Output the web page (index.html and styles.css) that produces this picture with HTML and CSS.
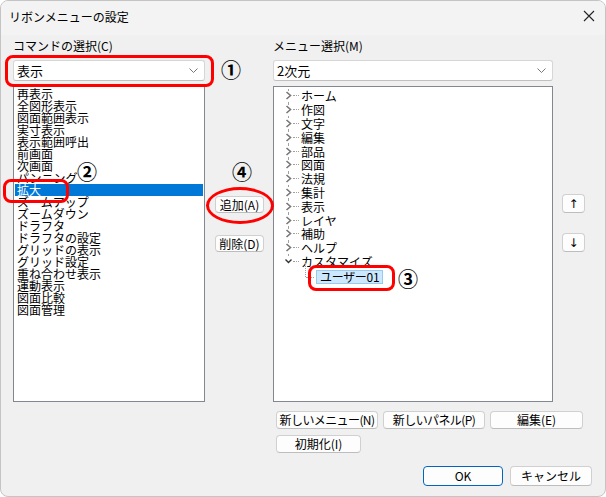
FILE: index.html
```html
<!DOCTYPE html>
<html lang="ja">
<head>
    <meta charset="UTF-8">
    <title>リボンメニューの設定</title>
    <link rel="stylesheet" href="styles.css">
</head>
<body>

<div class="window">
    <div class="titlebar">
        <span class="title">リボンメニューの設定</span>
        <svg class="close" width="12" height="12" viewBox="0 0 12 12"><path d="M1 1L11 11M11 1L1 11" stroke="#222" stroke-width="1.1"/></svg>
    </div>

    <div class="panes">
        <div class="col">
            <div class="label">コマンドの選択(C)</div>
            <div class="combo">
                <span>表示</span>
                <svg width="9" height="6" viewBox="0 0 9 6"><path d="M0.5 0.5L4.5 4.5L8.5 0.5" fill="none" stroke="#777"/></svg>
            </div>
            <ul class="listbox">
                <li>再表示</li>
                <li>全図形表示</li>
                <li>図面範囲表示</li>
                <li>実寸表示</li>
                <li>表示範囲呼出</li>
                <li>前画面</li>
                <li>次画面</li>
                <li>パンニング</li>
                <li class="selected">拡大</li>
                <li>ズームアップ</li>
                <li>ズームダウン</li>
                <li>ドラフタ</li>
                <li>ドラフタの設定</li>
                <li>グリッドの表示</li>
                <li>グリッド設定</li>
                <li>重ね合わせ表示</li>
                <li>運動表示</li>
                <li>図面比較</li>
                <li>図面管理</li>
            </ul>
        </div>

        <div class="col mid">
            <button class="btn add">追加(A)</button>
            <button class="btn del">削除(D)</button>
        </div>

        <div class="col">
            <div class="label">メニュー選択(M)</div>
            <div class="combo">
                <span>2次元</span>
                <svg width="9" height="6" viewBox="0 0 9 6"><path d="M0.5 0.5L4.5 4.5L8.5 0.5" fill="none" stroke="#777"/></svg>
            </div>
            <div class="tree">
                <ul class="nodes">
                    <li><span class="twisty"><svg width="7" height="9" viewBox="0 0 7 9"><path d="M1.5 1L5.5 4.5L1.5 8" fill="none" stroke="#777" stroke-width="1.6"/></svg></span><span class="dots"></span>ホーム</li>
                    <li><span class="twisty"><svg width="7" height="9" viewBox="0 0 7 9"><path d="M1.5 1L5.5 4.5L1.5 8" fill="none" stroke="#777" stroke-width="1.6"/></svg></span><span class="dots"></span>作図</li>
                    <li><span class="twisty"><svg width="7" height="9" viewBox="0 0 7 9"><path d="M1.5 1L5.5 4.5L1.5 8" fill="none" stroke="#777" stroke-width="1.6"/></svg></span><span class="dots"></span>文字</li>
                    <li><span class="twisty"><svg width="7" height="9" viewBox="0 0 7 9"><path d="M1.5 1L5.5 4.5L1.5 8" fill="none" stroke="#777" stroke-width="1.6"/></svg></span><span class="dots"></span>編集</li>
                    <li><span class="twisty"><svg width="7" height="9" viewBox="0 0 7 9"><path d="M1.5 1L5.5 4.5L1.5 8" fill="none" stroke="#777" stroke-width="1.6"/></svg></span><span class="dots"></span>部品</li>
                    <li><span class="twisty"><svg width="7" height="9" viewBox="0 0 7 9"><path d="M1.5 1L5.5 4.5L1.5 8" fill="none" stroke="#777" stroke-width="1.6"/></svg></span><span class="dots"></span>図面</li>
                    <li><span class="twisty"><svg width="7" height="9" viewBox="0 0 7 9"><path d="M1.5 1L5.5 4.5L1.5 8" fill="none" stroke="#777" stroke-width="1.6"/></svg></span><span class="dots"></span>法規</li>
                    <li><span class="twisty"><svg width="7" height="9" viewBox="0 0 7 9"><path d="M1.5 1L5.5 4.5L1.5 8" fill="none" stroke="#777" stroke-width="1.6"/></svg></span><span class="dots"></span>集計</li>
                    <li><span class="twisty"><svg width="7" height="9" viewBox="0 0 7 9"><path d="M1.5 1L5.5 4.5L1.5 8" fill="none" stroke="#777" stroke-width="1.6"/></svg></span><span class="dots"></span>表示</li>
                    <li><span class="twisty"><svg width="7" height="9" viewBox="0 0 7 9"><path d="M1.5 1L5.5 4.5L1.5 8" fill="none" stroke="#777" stroke-width="1.6"/></svg></span><span class="dots"></span>レイヤ</li>
                    <li><span class="twisty"><svg width="7" height="9" viewBox="0 0 7 9"><path d="M1.5 1L5.5 4.5L1.5 8" fill="none" stroke="#777" stroke-width="1.6"/></svg></span><span class="dots"></span>補助</li>
                    <li><span class="twisty"><svg width="7" height="9" viewBox="0 0 7 9"><path d="M1.5 1L5.5 4.5L1.5 8" fill="none" stroke="#777" stroke-width="1.6"/></svg></span><span class="dots"></span>ヘルプ</li>
                    <li class="open"><span class="twisty"><svg width="7" height="9" viewBox="0 0 7 9"><path d="M0.5 2.5L3.5 5.5L6.5 2.5" fill="none" stroke="#333" stroke-width="1.4"/></svg></span><span class="dots"></span>カスタマイズ</li>
                    <li class="child"><span class="dots"></span><span class="node-sel">ユーザー01</span></li>
                </ul>
            </div>
        </div>

        <div class="col arrows">
            <button class="btn arrow">&#x2191;</button>
            <button class="btn arrow">&#x2193;</button>
        </div>
    </div>

    <div class="tree-buttons">
        <div class="btn-row">
            <button class="btn w-new">新しいメニュー(N)</button>
            <button class="btn w-new">新しいパネル(P)</button>
            <button class="btn w-edit">編集(E)</button>
        </div>
        <div class="btn-row">
            <button class="btn w-init">初期化(I)</button>
        </div>
    </div>

    <div class="footer">
        <button class="btn ok">OK</button>
        <button class="btn cancel">キャンセル</button>
    </div>

    <!-- annotations drawn over the dialog -->
    <div class="mark r1"></div>
    <div class="mark r2"></div>
    <div class="mark r3"></div>
    <div class="mark r4"></div>
    <span class="num n1">①</span>
    <span class="num n2">②</span>
    <span class="num n3">③</span>
    <span class="num n4">④</span>
</div>

</body>
</html>
```

FILE: styles.css
```css
* {
    box-sizing: border-box;
}
body {
    margin: 0;
    background: #fff;
    font-family: "Noto Sans CJK JP", "Noto Sans", sans-serif;
    font-size: 12px;
    color: #000;
}
ul {
    list-style: none;
    margin: 0;
    padding: 0;
}
.window {
    position: relative;
    width: 606px;
    height: 497px;
    background: #f0f0f0;
    border: 1px solid #c4c4c4;
    border-radius: 8px;
    overflow: hidden;
}
.titlebar {
    height: 34px;
    background: #f3f3f3;
    display: flex;
    align-items: center;
    justify-content: space-between;
    padding: 0 10px 4px 8px;
}
.title {
    font-size: 12px;
}

.panes {
    display: grid;
    grid-template-columns: 192px 68px 280px 52px;
    padding: 4px 0 0 12px;
}
.label {
    height: 14px;
    line-height: 14px;
    margin-bottom: 7px;
}
.combo {
    height: 21px;
    background: #fff;
    border: 1px solid #d6d6d6;
    border-bottom-color: #c0c0c0;
    border-radius: 3px;
    display: flex;
    align-items: center;
    justify-content: space-between;
    padding: 0 6px 0 3px;
    font-size: 13px;
    margin-bottom: 5px;
}
.listbox,
.tree {
    height: 316px;
    background: #fff;
    border: 1px solid #828790;
}
.listbox {
    padding: 1px 1px 0 1px;
}
.listbox li {
    height: 12px;
    line-height: 12px;
    padding-left: 2px;
    white-space: nowrap;
}
.listbox li.selected {
    background: #0078d7;
    color: #fff;
}

.mid {
    padding: 157px 0 0 10px;
    display: flex;
    flex-direction: column;
    align-items: flex-start;
    gap: 22px;
}
.btn {
    font-family: inherit;
    font-size: 12px;
    color: #000;
    background: #fdfdfd;
    border: 1px solid #d0d0d0;
    border-bottom-color: #bdbdbd;
    border-radius: 4px;
    padding: 0;
    line-height: 1;
    white-space: nowrap;
}
.add,
.del {
    width: 49px;
    height: 17px;
}

.tree {
    padding: 2px 0 0 10px;
}
.nodes li {
    position: relative;
    height: 13.8px;
    display: flex;
    align-items: center;
    white-space: nowrap;
}
.nodes li::before {
    content: "";
    position: absolute;
    left: 4px;
    top: 0;
    bottom: 0;
    border-left: 1px dotted #a0a0a0;
}
.nodes li.open::before {
    bottom: 50%;
}
.nodes li.child::before {
    left: 21px;
    top: -6px;
    bottom: 50%;
}
.twisty {
    position: relative;
    z-index: 1;
    display: flex;
    width: 8px;
    height: 10px;
    align-items: center;
    justify-content: center;
    background: #fff;
    flex: none;
}
.dots {
    width: 6px;
    border-top: 1px dotted #a0a0a0;
    margin: 0 2px 0 1px;
}
.child {
    padding-left: 21px;
    height: 16px !important;
    margin-top: 1px;
}
.child .dots {
    width: 8px;
    margin: 0 2px 0 1px;
}
.node-sel {
    background: #cce8ff;
    border: 1px solid #99c9ef;
    padding: 0 3px;
    height: 14px;
    line-height: 12px;
    letter-spacing: -0.3px;
}

.arrows {
    padding: 155px 0 0 9px;
    display: flex;
    flex-direction: column;
    align-items: flex-start;
    gap: 20px;
}
.arrow {
    width: 23px;
    height: 19px;
    font-family: "DejaVu Sans", sans-serif;
    font-size: 12px;
}

.tree-buttons {
    padding: 9px 0 0 275px;
    display: flex;
    flex-direction: column;
    gap: 6px;
}
.btn-row {
    display: flex;
    gap: 5px;
}
.btn-row .btn {
    height: 18px;
}
.w-new {
    width: 102px;
    letter-spacing: -0.6px;
}
.w-edit { width: 93px; }
.w-init { width: 85px; }

.footer {
    display: flex;
    justify-content: flex-end;
    gap: 7px;
    padding: 13px 13px 0 0;
}
.footer .btn {
    height: 20px;
}
.ok {
    width: 80px;
    border: 1px solid #0067c0 !important;
}
.cancel {
    width: 82px;
}

.mark {
    position: absolute;
    border: 3px solid #f00;
    border-radius: 8px;
}
.r1 { left: 4px; top: 54px; width: 209px; height: 32px; }
.r2 { left: 2px; top: 178px; width: 66px; height: 24px; }
.r3 { left: 307px; top: 264px; width: 87px; height: 26px; }
.r4 { left: 205px; top: 186px; width: 68px; height: 37px; border-radius: 50%; }
.num {
    position: absolute;
    font-size: 20px;
    font-weight: bold;
    line-height: 20px;
}
.n1 { left: 220px; top: 59px; }
.n2 { left: 76px; top: 161px; }
.n3 { left: 397px; top: 268px; }
.n4 { left: 231px; top: 161px; }
```
